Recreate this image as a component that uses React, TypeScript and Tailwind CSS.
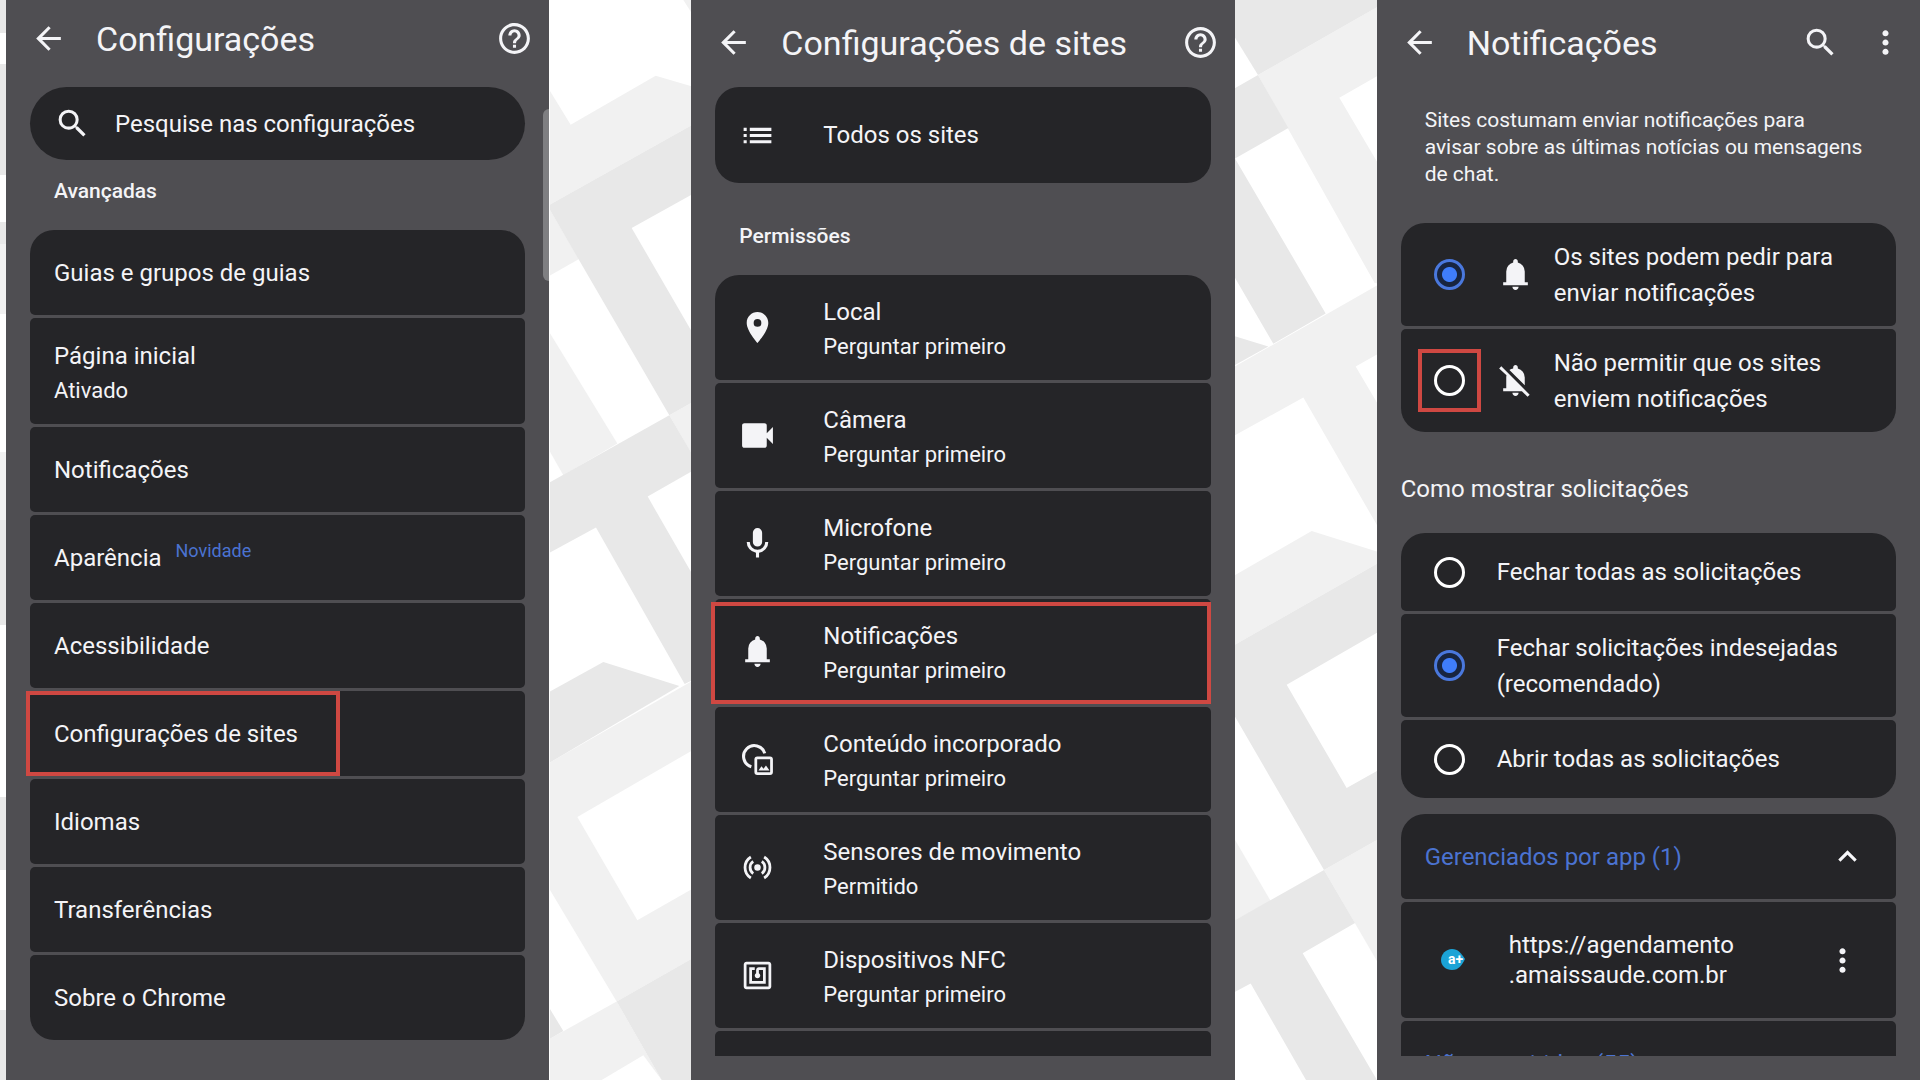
import { useState } from 'react';
import type { ReactNode } from 'react';
import {
  MdArrowBack,
  MdExpandLess,
  MdHelpOutline,
  MdList,
  MdMoreVert,
  MdNfc,
  MdPlace,
  MdSearch,
} from 'react-icons/md';

const ICON = 37;

function VideocamIcon() {
  return (
    <svg width={ICON} height={ICON} viewBox="0 -960 960 960" fill="currentColor" aria-hidden="true">
      <path d="M140-160q-25 0-42.500-17.500T80-220v-520q0-25 17.500-42.500T140-800h520q25 0 42.500 17.500T720-740v200l160-160v440L720-420v200q0 25-17.500 42.500T660-160H140Z" />
    </svg>
  );
}

function MicIcon() {
  return (
    <svg width={ICON} height={ICON} viewBox="0 -960 960 960" fill="currentColor" aria-hidden="true">
      <path d="M480-400q-50 0-85-35t-35-85v-240q0-50 35-85t85-35q50 0 85 35t35 85v240q0 50-35 85t-85 35Zm-40 280v-123q-104-14-172-93t-68-184h80q0 83 58.500 141.500T480-320q83 0 141.500-58.500T680-520h80q0 105-68 184t-172 93v123h-80Z" />
    </svg>
  );
}

function BellIcon() {
  return (
    <svg width={ICON} height={ICON} viewBox="0 -960 960 960" fill="currentColor" aria-hidden="true">
      <path d="M160-200v-80h80v-280q0-83 50-147.500T420-792v-28q0-25 17.500-42.500T480-880q25 0 42.500 17.500T540-820v28q80 20 130 84.500T720-560v280h80v80H160Zm320 120q-33 0-56.500-23.500T400-160h160q0 33-23.500 56.500T480-80Z" />
    </svg>
  );
}

function BellOffIcon() {
  return (
    <svg width={ICON} height={ICON} viewBox="0 -960 960 960" fill="currentColor" aria-hidden="true">
      <path d="M792-56 646-200H160v-80h80v-280q0-27 6-54L56-792l56-56 736 736-56 56ZM480-80q-33 0-56.500-23.500T400-160h160q0 33-23.500 56.500T480-80Zm240-274L322-752q21-15 46-25.500t52-14.500v-28q0-25 17.500-42.500T480-880q25 0 42.500 17.500T540-820v28q80 20 130 84.500T720-560v206Z" />
    </svg>
  );
}

function EmbeddedIcon() {
  return (
    <svg width={ICON} height={ICON} viewBox="0 0 24 24" fill="none" stroke="currentColor" aria-hidden="true">
      <path d="M16.700 8A7 7 0 1 0 8 16.700" strokeWidth="2" />
      <rect x="10.900" y="10.900" width="10.200" height="10.200" rx="1" strokeWidth="1.800" />
      <path d="M12.600 19.200l2-2.800 1.300 1.600 1.600-2.100 2.300 3.300z" fill="currentColor" stroke="none" />
    </svg>
  );
}

function SensorsIcon() {
  return (
    <svg width={ICON} height={ICON} viewBox="0 0 24 24" fill="none" stroke="currentColor" strokeWidth="1.800" aria-hidden="true">
      <path d="M7.700 5.200a8 8 0 0 0 0 13.600M16.300 5.200a8 8 0 0 1 0 13.600" />
      <path d="M9.200 8.100a4.800 4.800 0 0 0 0 7.800M14.800 8.100a4.800 4.800 0 0 1 0 7.800" />
      <circle cx="12" cy="12" r="2.100" fill="currentColor" stroke="none" />
    </svg>
  );
}

// Geometric ribbons behind the phones
function Backdrop() {
  return (
    <svg
      className="absolute inset-0 h-full w-full"
      viewBox="0 0 1920 1080"
      preserveAspectRatio="none"
      aria-hidden="true"
    >
      <g fill="#e8e8e8">
        <path d="M0 0h6v33H0zM0 64h6v111H0zM0 222h6v22H0zM0 520h6v105H0zM0 797h6v73H0zM0 1010h6v70H0z" />
        <path d="M0 244h6v70H0zM0 452h6v68H0z" fill="#f1f1f1" />
      </g>
      <svg x="540" y="0" width="160" height="1080" viewBox="0 0 480 1568" preserveAspectRatio="none">
        <g fill="#f1f1f1">
          <path d="M430 0H480V38z" />
          <path d="M30 132L92 181 347 110 480 129V175L30 297z" />
          <path d="M30 305L117 376 30 400z" />
          <path d="M30 484L232 644 70 690 30 656z" />
          <path d="M388 603L480 578V680z" />
          <path d="M30 1107L480 982V1083L112 1186 292 1336 480 1284V1385L230 1454 30 1292z" />
          <path d="M30 1508L230 1454 365 1568 310 1532 185 1568H30z" />
        </g>
        <g fill="#e8e8e8">
          <path d="M30 297L480 175V276L275 331 480 502V578L388 603 30 305z" />
          <path d="M30 700L388 603 457 660V684L323 721 480 853V982L434 993 168 766 30 802z" />
          <path d="M30 1004L190 961 418 996 30 1107z" />
          <path d="M230 1454L480 1385V1568H365z" />
          <path d="M30 1465L70 1497 30 1508z" />
        </g>
      </svg>
      <svg x="1230" y="0" width="150" height="1080" viewBox="0 0 450 1568" preserveAspectRatio="none">
        <g fill="#f1f1f1">
          <path d="M84 109L450 8V108L328 142 450 242V412L434 411z" />
          <path d="M0 536L450 412V512L377 532 450 592V770L220 577 0 636z" />
          <path d="M0 839L245 771 450 802V816L0 940z" />
          <path d="M0 1207L122 1308 0 1340z" />
          <path d="M282 1263L450 1217V1403z" />
        </g>
        <g fill="#e8e8e8">
          <path d="M0 0H450V8L84 109 0 43z" />
          <path d="M0 132L84 109 175 186 15 230 287 455 130 499 0 391z" />
          <path d="M0 486L115 503 0 534z" />
          <path d="M0 940L450 816V916L170 994 350 1144 450 1117V1217L282 1263 0 1028z" />
          <path d="M0 1340L282 1263 375 1340 218 1384 441 1568H228L62 1428 0 1444z" />
        </g>
      </svg>
    </svg>
  );
}

function Phone({ children }: { children: ReactNode }) {
  return (
    <section className="relative flex min-w-0 flex-1 flex-col overflow-hidden bg-[#4f4e52] px-6">{children}</section>
  );
}

function TopBar({ title, children, compact }: { title: string; children: ReactNode; compact?: boolean }) {
  return (
    <header className={`-mr-2 flex shrink-0 items-center gap-7 ${compact ? 'mb-[10px] h-[77px]' : 'mb-[2px] h-[85px]'}`}>
      <button type="button" aria-label="Voltar">
        <MdArrowBack size={ICON} />
      </button>
      <h1 className="flex-1 pl-px text-[34px] leading-10 whitespace-nowrap">{title}</h1>
      {children}
    </header>
  );
}

const rowClass = 'relative w-full shrink-0 rounded-[5px] bg-[#252528] text-left first:rounded-t-3xl last:rounded-b-3xl';

const settings = [
  { title: 'Guias e grupos de guias' },
  { title: 'Página inicial', detail: 'Ativado' },
  { title: 'Notificações' },
  { title: 'Aparência', badge: 'Novidade' },
  { title: 'Acessibilidade' },
  { title: 'Configurações de sites', marked: true },
  { title: 'Idiomas' },
  { title: 'Transferências' },
  { title: 'Sobre o Chrome' },
];

function SettingsPhone() {
  return (
    <Phone>
      <TopBar title="Configurações" compact>
        <button type="button" aria-label="Ajuda">
          <MdHelpOutline size={ICON} />
        </button>
      </TopBar>
      <label className="flex h-[73px] shrink-0 items-center gap-6 rounded-full bg-[#252528] px-6">
        <MdSearch size={ICON} className="shrink-0" />
        <input
          type="search"
          aria-label="Pesquise nas configurações"
          placeholder="Pesquise nas configurações"
          className="min-w-0 flex-1 bg-transparent text-[24px] leading-9 outline-none placeholder:text-[#f4f4f7] placeholder:opacity-100"
        />
      </label>
      <h2 className="mt-[17px] mb-[25px] pl-6 text-[21px] leading-7 font-medium">Avançadas</h2>
      <nav className="flex flex-col gap-[3px]">
        {settings.map((item) => (
          <button
            key={item.title}
            type="button"
            className={`${rowClass} pl-6 ${item.detail ? 'h-[106px] pt-[3px]' : 'h-[85px]'}`}
          >
            <span className="block text-[24px] leading-9">
              {item.title}
              {item.badge && <sup className="ml-3.5 text-[18px] leading-none text-[#4b73d1]">{item.badge}</sup>}
            </span>
            {item.detail && <span className="block text-[22px] leading-[34px]">{item.detail}</span>}
            {item.marked && <span className="absolute inset-y-0 -left-1 w-[314px] border-4 border-[#cf4842]" />}
          </button>
        ))}
      </nav>
      <div className="absolute top-[109px] right-0 h-[172px] w-[6px] rounded-l-md bg-[#7f7f82]" />
    </Phone>
  );
}

const permissions = [
  { icon: <MdPlace size={ICON} />, title: 'Local', detail: 'Perguntar primeiro' },
  { icon: <VideocamIcon />, title: 'Câmera', detail: 'Perguntar primeiro' },
  { icon: <MicIcon />, title: 'Microfone', detail: 'Perguntar primeiro' },
  { icon: <BellIcon />, title: 'Notificações', detail: 'Perguntar primeiro', marked: true },
  { icon: <EmbeddedIcon />, title: 'Conteúdo incorporado', detail: 'Perguntar primeiro' },
  { icon: <SensorsIcon />, title: 'Sensores de movimento', detail: 'Permitido' },
  { icon: <MdNfc size={33} />, title: 'Dispositivos NFC', detail: 'Perguntar primeiro' },
  { icon: null, title: '', detail: '' },
];

function SitesPhone() {
  return (
    <Phone>
      <TopBar title="Configurações de sites">
        <button type="button" aria-label="Ajuda">
          <MdHelpOutline size={ICON} />
        </button>
      </TopBar>
      <button
        type="button"
        className="flex h-24 shrink-0 items-center rounded-3xl bg-[#252528] text-left text-[24px] leading-9"
      >
        <span className="flex w-[84px] justify-center">
          <MdList size={ICON} />
        </span>
        <span className="pl-6">Todos os sites</span>
      </button>
      <h2 className="mt-[39px] mb-[25px] pl-6 text-[21px] leading-7 font-medium">Permissões</h2>
      {/* the list slides under the bottom inset; the marker hangs 4px out on the left */}
      <div className="mb-6 -ml-1 flex min-h-0 flex-1 flex-col gap-[3px] overflow-hidden pl-1">
        {permissions.map((item) => (
          <button key={item.title} type="button" className={`${rowClass} flex h-[105px] items-center`}>
            <span className="flex w-[84px] justify-center">{item.icon}</span>
            <span className="pt-[3px] pl-6">
              <span className="block text-[24px] leading-9">{item.title}</span>
              <span className="block text-[22px] leading-[34px]">{item.detail}</span>
            </span>
            {item.marked && <span className="absolute top-[3px] right-0 bottom-0 -left-1 border-4 border-[#cf4842]" />}
          </button>
        ))}
      </div>
    </Phone>
  );
}

type RadioRowProps = {
  name: string;
  label: string;
  checked: boolean;
  onChange: () => void;
  icon?: ReactNode;
  tall?: boolean;
  marked?: boolean;
};

function RadioRow({ name, label, checked, onChange, icon, tall, marked }: RadioRowProps) {
  return (
    <label className={`${rowClass} flex items-center pr-6 pl-[33px] ${tall ? 'h-[103px]' : 'h-[78px]'}`}>
      <span className="relative flex shrink-0">
        <input
          type="radio"
          name={name}
          checked={checked}
          onChange={onChange}
          className="h-[31px] w-[31px] appearance-none rounded-full border-[3px] border-white checked:border-[#4a78dd] checked:bg-[radial-gradient(circle,#3f7dfb_7px,#182540_8px)]"
        />
        {marked && <span className="absolute -inset-4 border-4 border-[#cf4842]" />}
      </span>
      {icon && <span className="ml-8 shrink-0">{icon}</span>}
      <span className={`text-[24px] leading-9 ${icon ? 'ml-5' : 'ml-8'}`}>{label}</span>
    </label>
  );
}

function NotificationsPhone() {
  const [permission, setPermission] = useState('ask');
  const [requests, setRequests] = useState('unwanted');

  return (
    <Phone>
      <TopBar title="Notificações">
        <button type="button" aria-label="Pesquisar">
          <MdSearch size={ICON} />
        </button>
        <button type="button" aria-label="Mais opções">
          <MdMoreVert size={ICON} />
        </button>
      </TopBar>
      <div className="mb-6 min-h-0 flex-1 overflow-hidden">
        <p className="mt-5 mb-[35px] pl-6 text-[21px] leading-[27px]">
          Sites costumam enviar notificações para
          <br />
          avisar sobre as últimas notícias ou mensagens
          <br />
          de chat.
        </p>
        <div className="flex flex-col gap-[3px]">
          <RadioRow
            name="permission"
            label="Os sites podem pedir para enviar notificações"
            icon={<BellIcon />}
            checked={permission === 'ask'}
            onChange={() => setPermission('ask')}
            tall
          />
          <RadioRow
            name="permission"
            label="Não permitir que os sites enviem notificações"
            icon={<BellOffIcon />}
            checked={permission === 'block'}
            onChange={() => setPermission('block')}
            tall
            marked
          />
        </div>
        <h2 className="mt-[39px] mb-[26px] text-[24px] leading-9">Como mostrar solicitações</h2>
        <div className="flex flex-col gap-[3px]">
          <RadioRow
            name="requests"
            label="Fechar todas as solicitações"
            checked={requests === 'all'}
            onChange={() => setRequests('all')}
          />
          <RadioRow
            name="requests"
            label="Fechar solicitações indesejadas (recomendado)"
            checked={requests === 'unwanted'}
            onChange={() => setRequests('unwanted')}
            tall
          />
          <RadioRow
            name="requests"
            label="Abrir todas as solicitações"
            checked={requests === 'open'}
            onChange={() => setRequests('open')}
          />
        </div>
        <div className="mt-4 flex flex-col gap-[3px]">
          <button
            type="button"
            className={`${rowClass} flex h-[85px] items-center justify-between pr-[30px] pl-6 text-[24px] leading-9 text-[#4b73d1]`}
          >
            Gerenciados por app (1)
            <MdExpandLess size={ICON} className="text-[#f7f7fa]" />
          </button>
          <div className={`${rowClass} flex h-[116px] items-center pr-[35px] pl-10`}>
            <svg width="24" height="22" viewBox="0 0 24 22" aria-hidden="true">
              <path d="M11 0c6 0 9 4 13 10-3 6-6 11-13 11C5 21 0 17 0 11S5 0 11 0z" fill="#1ba3d6" />
              <text x="7" y="15" fontSize="14" fontWeight="700" fill="#fff" fontFamily="Roboto, sans-serif">
                a+
              </text>
            </svg>
            <a href="#site" className="ml-11 flex-1 text-[24px] leading-[30px]">
              https://agendamento
              <br />
              .amaissaude.com.br
            </a>
            <button type="button" aria-label="Mais opções do site">
              <MdMoreVert size={ICON} />
            </button>
          </div>
          <button type="button" className={`${rowClass} h-[85px] pl-6 text-[24px] leading-9 text-[#4b73d1]`}>
            Não permitidos (55)
          </button>
        </div>
      </div>
    </Phone>
  );
}

export default function App() {
  return (
    <main className="relative flex h-screen min-h-[1080px] gap-[142px] overflow-hidden bg-white pl-[6px] font-['Roboto',sans-serif] text-[#f4f4f7]">
      <Backdrop />
      <SettingsPhone />
      <SitesPhone />
      <NotificationsPhone />
    </main>
  );
}
